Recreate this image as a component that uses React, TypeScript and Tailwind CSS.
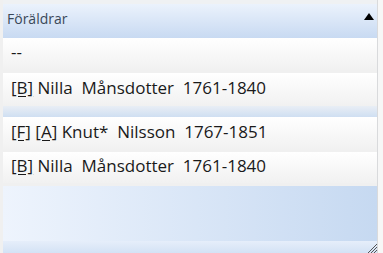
import React from 'react';

type Part = { tag?: string; text: string };

const rows1: Part[][] = [
  [{ text: '--' }],
  [{ tag: '[B]', text: 'Nilla  Månsdotter  1761-1840' }],
];

const rows2: Part[][] = [
  [{ tag: '[F]', text: '' }, { tag: '[A]', text: 'Knut*  Nilsson  1767-1851' }],
  [{ tag: '[B]', text: 'Nilla  Månsdotter  1761-1840' }],
];

function Row({ parts, h }: { parts: Part[]; h: string }) {
  return (
    <div
      className={`${h} flex items-center pl-[8px] pb-[4px] bg-gradient-to-b from-[#ffffff] to-[#f1f1f1] whitespace-pre text-[17px] text-[#1a1a1a]`}
    >
      {parts.map((p, i) => (
        <span key={i}>
          {p.tag && <span className="underline underline-offset-2">{p.tag}</span>}
          {p.tag && ' '}
          {p.text}
        </span>
      ))}
    </div>
  );
}

export default function App() {
  return (
    <div
      className="w-[383px] h-[253px] bg-[#f0f0f0] flex overflow-hidden"
      style={{ fontFamily: '"Open Sans", "Noto Sans", sans-serif' }}
    >
      <div className="ml-[3px] w-[374px] flex flex-col">
        <div className="h-[4px] bg-[#eff1f3]" />
        <div className="h-[34px] flex items-center justify-between pl-[4px] pr-[3px] pb-[5px] bg-gradient-to-b from-[#ebf2fc] to-[#c8daf2]">
          <span className="text-[14px] text-[#3a4858]">Föräldrar</span>
          <svg width="10" height="7" viewBox="0 0 10 7" className="mb-[4px]">
            <polygon points="0,7 5,0 10,7" fill="#000" />
          </svg>
        </div>
        <Row parts={rows1[0]} h="h-[32px]" />
        <div className="h-[3px]" />
        <Row parts={rows1[1]} h="h-[33px]" />
        <div className="h-[11px] bg-gradient-to-b from-[#e9eef5] to-[#cfdff2]" />
        <Row parts={rows2[0]} h="h-[33px]" />
        <div className="h-[2px]" />
        <Row parts={rows2[1]} h="h-[31px]" />
        <div className="h-[3px]" />
        <div className="h-[55px] bg-gradient-to-r from-[#eef4fd] to-[#c6d9f1]" />
        <div className="relative h-[12px] bg-gradient-to-b from-[#e6eefa] to-[#d3e2f5]">
          <svg width="10" height="10" viewBox="0 0 10 10" className="absolute right-0 bottom-0">
            <line x1="10" y1="1" x2="1" y2="10" stroke="#555" strokeWidth="1" />
            <line x1="10" y1="4" x2="4" y2="10" stroke="#555" strokeWidth="1" />
            <line x1="10" y1="7" x2="7" y2="10" stroke="#555" strokeWidth="1" />
          </svg>
        </div>
      </div>
      <div className="w-[1px] bg-[#d9dadc]" />
      <div className="flex-1 bg-[#f7f7f7]" />
    </div>
  );
}
